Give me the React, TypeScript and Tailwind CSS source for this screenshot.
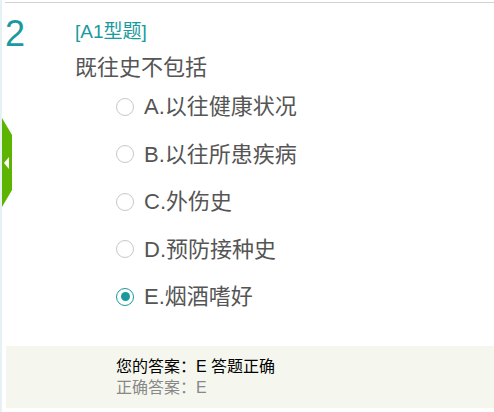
import React from 'react';

const options = [
  { key: 'A', text: '以往健康状况' },
  { key: 'B', text: '以往所患疾病' },
  { key: 'C', text: '外伤史' },
  { key: 'D', text: '预防接种史' },
  { key: 'E', text: '烟酒嗜好' },
];

const App: React.FC = () => {
  const selected = 'E';

  return (
    <div
      className="relative w-[494px] h-[412px] bg-white border-l-2 border-[#e6f1f4] overflow-hidden"
      style={{ fontFamily: '"Liberation Sans", Arial, "Noto Sans CJK SC", sans-serif' }}
    >
      {/* side toggle tab */}
      <div className="absolute left-0 top-[118px]">
        <svg width="11" height="90" viewBox="0 0 11 90">
          <polygon points="0,0 10,17 10,72 0,89" fill="#5cb300" />
          <polygon points="2,45 7,39 7,51" fill="#ffffff" />
        </svg>
      </div>

      <div className="pl-[3px] pt-[2px]">
        <div className="border-t border-[#d2d2d2]" />
      </div>

      <div className="flex pt-[13px]">
        <div className="w-[73px] pl-[3px] text-[36px] leading-[36px] text-[#1a9a9e]">2</div>
        <div className="flex-1">
          <div className="text-[19px] leading-[24px] pt-[4px] text-[#1a9a9e]">[A1型题]</div>
          <div className="text-[22px] leading-[28px] mt-[10px] text-[#555555]">既往史不包括</div>
          <div className="mt-[1px] pl-[41px] flex flex-col">
            {options.map(o => (
              <div key={o.key} className="flex items-center h-[47.5px]">
                {o.key === selected ? (
                  <span className="w-[18px] h-[18px] rounded-full border-[1.5px] border-[#1a9a9e] flex items-center justify-center">
                    <span className="w-[9px] h-[9px] rounded-full bg-[#1a9a9e]" />
                  </span>
                ) : (
                  <span className="w-[18px] h-[18px] rounded-full border-[1.5px] border-[#c8c8c8]" />
                )}
                <span className="ml-[10px] text-[22px] text-[#555555]">
                  {o.key}.{o.text}
                </span>
              </div>
            ))}
          </div>
        </div>
      </div>

      <div className="ml-[4px] mt-[25px] h-[62px] bg-[#f5f7ef] pl-[110px] pt-[10px] text-[16px] leading-[21px]">
        <div className="text-[#000000]">您的答案：E 答题正确</div>
        <div className="text-[#888888]">正确答案：E</div>
      </div>
    </div>
  );
};

export default App;
